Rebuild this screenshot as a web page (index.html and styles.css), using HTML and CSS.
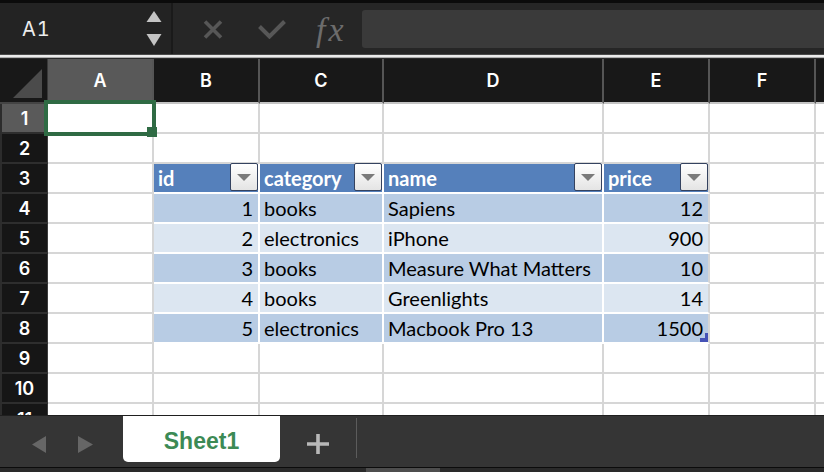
FILE: index.html
```html
<!DOCTYPE html>
<html>
<head>
<meta charset="utf-8">
<link rel="stylesheet" href="styles.css">
</head>
<body>
<div class="app">
  <div class="toolbar">
    <div class="namebox">
      <span class="cellref">A1</span>
      <svg class="stepper" width="16" height="36" viewBox="0 0 16 36"><polygon points="0.5,11 8,0 15.5,11" fill="#c4c4c4"/><polygon points="0.5,23 15.5,23 8,35" fill="#c4c4c4"/></svg>
    </div>
    <div class="fbar">
      <svg class="ic-x" width="20" height="19" viewBox="0 0 20 19"><path d="M2 1.5 L18 17.5 M18 1.5 L2 17.5" stroke="#575757" stroke-width="3.6" fill="none"/></svg>
      <svg class="ic-ok" width="28" height="19" viewBox="0 0 28 19"><polyline points="1.5,6.5 11.5,16.5 26.5,1.5" stroke="#575757" stroke-width="4" fill="none"/></svg>
      <span class="fx">fx</span>
      <div class="finput"></div>
    </div>
  </div>
  <div class="sep"></div>
  <div class="sheet">
    <div class="corner"><svg width="29" height="29" viewBox="0 0 29 29"><polygon points="0,29 29,29 29,0" fill="#4b4b4b"/></svg></div>
    <div class="ch ch-sel">A</div><div class="ch">B</div><div class="ch">C</div><div class="ch">D</div><div class="ch">E</div><div class="ch">F</div><div class="ch ch-last"></div>

    <div class="rh rh-sel">1</div><div class="c"></div><div class="c"></div><div class="c"></div><div class="c"></div><div class="c"></div><div class="c"></div><div class="c"></div>
    <div class="rh">2</div><div class="c"></div><div class="c"></div><div class="c"></div><div class="c"></div><div class="c"></div><div class="c"></div><div class="c"></div>
    <div class="rh">3</div><div class="c"></div>
    <div class="c th">id<span class="fbtn"><span class="tri"></span></span></div>
    <div class="c th">category<span class="fbtn"><span class="tri"></span></span></div>
    <div class="c th">name<span class="fbtn"><span class="tri"></span></span></div>
    <div class="c th tlast">price<span class="fbtn"><span class="tri"></span></span></div>
    <div class="c"></div><div class="c"></div>

    <div class="rh">4</div><div class="c"></div><div class="c td band1 num">1</div><div class="c td band1">books</div><div class="c td band1">Sapiens</div><div class="c td band1 num tlast">12</div><div class="c"></div><div class="c"></div>
    <div class="rh">5</div><div class="c"></div><div class="c td band2 num">2</div><div class="c td band2">electronics</div><div class="c td band2">iPhone</div><div class="c td band2 num tlast">900</div><div class="c"></div><div class="c"></div>
    <div class="rh">6</div><div class="c"></div><div class="c td band1 num">3</div><div class="c td band1">books</div><div class="c td band1">Measure What Matters</div><div class="c td band1 num tlast">10</div><div class="c"></div><div class="c"></div>
    <div class="rh">7</div><div class="c"></div><div class="c td band2 num">4</div><div class="c td band2">books</div><div class="c td band2">Greenlights</div><div class="c td band2 num tlast">14</div><div class="c"></div><div class="c"></div>
    <div class="rh">8</div><div class="c"></div><div class="c td band1 num">5</div><div class="c td band1">electronics</div><div class="c td band1">Macbook Pro 13</div><div class="c td band1 num tlast">1500<span class="resize"></span></div><div class="c"></div><div class="c"></div>
    <div class="rh">9</div><div class="c"></div><div class="c"></div><div class="c"></div><div class="c"></div><div class="c"></div><div class="c"></div><div class="c"></div>
    <div class="rh">10</div><div class="c"></div><div class="c"></div><div class="c"></div><div class="c"></div><div class="c"></div><div class="c"></div><div class="c"></div>
    <div class="rh rh-cut">11</div><div class="c"></div><div class="c"></div><div class="c"></div><div class="c"></div><div class="c"></div><div class="c"></div><div class="c"></div>

    <div class="selbox"><div class="selhandle"></div></div>
  </div>
  <div class="tabbar">
    <div class="tabrow">
      <div class="nav">
        <svg width="14" height="17" viewBox="0 0 14 17"><polygon points="14,0 14,17 0,8.5" fill="#666"/></svg>
        <svg width="15" height="17" viewBox="0 0 15 17"><polygon points="0,0 0,17 15,8.5" fill="#666"/></svg>
      </div>
      <div class="tab">Sheet1</div>
      <div class="add"><svg width="22" height="20" viewBox="0 0 22 20"><path d="M0 10 H22 M11 0 V20" stroke="#b8b8b8" stroke-width="3.6" fill="none"/></svg></div>
      <div class="tdiv"></div>
    </div>
    <div class="hscroll"><div class="thumb"></div></div>
  </div>
</div>
</body>
</html>
```
FILE: styles.css
```css
* { box-sizing: border-box; margin: 0; padding: 0; }
html, body { width: 824px; height: 472px; overflow: hidden; background: #222; }

.app { display: flex; flex-direction: column; width: 824px; height: 472px; }

/* ---------- formula toolbar ---------- */
.toolbar { flex: none; height: 54px; border-top: 3px solid #0b0b0b; background: #262626; display: flex; }
.namebox { width: 173px; background: #232323; border-right: 2px solid #1a1a1a; display: flex; align-items: center; justify-content: space-between; padding: 1px 9px 0 22px; }
.cellref { font: 400 20px "Inter", "Liberation Sans", sans-serif; font-variant-numeric: tabular-nums; letter-spacing: 1px; color: #ececec; }
.fbar { flex: 1; display: flex; align-items: center; padding-top: 1px; }
.ic-x { margin-left: 30px; }
.ic-ok { margin-left: 35px; }
.fx { margin-left: 30px; font: italic 400 34px "Liberation Serif", "DejaVu Serif", serif; letter-spacing: 3px; color: #6c6c6c; width: 33px; line-height: 1; margin-top: 1px; }
.finput { flex: 1; height: 38px; margin-left: 13px; background: #3a3a3a; border-radius: 3px 0 0 3px; }

.sep { flex: none; height: 5px; background: linear-gradient(#4a4a4a 0 1px, #ececec 1px 3px, #aeaeae 3px 4px, #2a2a2a 4px 5px); }

/* ---------- sheet grid ---------- */
.sheet { flex: 1; overflow: hidden; background: #fff; display: grid; position: relative;
  grid-template-columns: 48px 106px 106px 124px 220px 106px 106px 1fr;
  grid-template-rows: 45px; grid-auto-rows: 30px; }

.corner { background: #181818; border-right: 1px solid #3a3a3a; border-bottom: 2px solid #444; display: flex; justify-content: flex-end; align-items: flex-end; padding: 0 5px 4px 0; }
.ch { background: #181818; border-right: 2px solid #555; border-bottom: 2px solid #c4c4c4; color: #fff; font: 600 18px "Inter", "Liberation Sans", sans-serif; display: flex; align-items: center; justify-content: center; padding-bottom: 1px; }
.ch-sel { background: #595959; }
.ch-last { border-right: none; }

.rh { background: #161616; border-left: 2px solid #2c2c2c; border-right: 1px solid #3c3c3c; border-bottom: 2px solid #2e2e2e; color: #fff; font: 600 18px "Inter", "Liberation Sans", sans-serif; display: flex; align-items: center; justify-content: center; }
.rh-sel { background: #5a5a5a; }
.rh-cut { align-items: flex-start; padding-top: 5px; }

.c { background: #fff; border-right: 2px solid #d6d6d6; border-bottom: 2px solid #d6d6d6; position: relative; display: flex; align-items: center; font: 400 20px "Lato", "Liberation Sans", sans-serif; color: #000; white-space: nowrap; padding: 0 4px; }

.th { background: #5580bb; color: #fff; font-weight: 700; border-right-color: #fff; border-bottom-color: #fff; padding-left: 4px; }
.td { border-right-color: #fff; border-bottom-color: #fff; }
.band1 { background: #b8cce4; }
.band2 { background: #dce6f1; }
.num { justify-content: flex-end; padding-right: 5px; }
.tlast { border-right-color: #d6d6d6; }

.fbtn { position: absolute; right: 0; top: -1px; width: 28px; height: 28px; border: 1px solid #34425f; border-radius: 2px; background: linear-gradient(#ffffff, #e4e4e4); display: flex; align-items: center; justify-content: center; }
.tri { width: 0; height: 0; border-left: 7.5px solid transparent; border-right: 7.5px solid transparent; border-top: 7px solid #7a7a7a; margin-top: 1px; }

/* selection overlay on A1 */
.selbox { position: absolute; left: 44px; top: 41px; width: 112px; height: 36px; border: 4px solid #2f6b44; z-index: 10; }
.selhandle { position: absolute; right: -5px; bottom: -5px; width: 10px; height: 10px; background: #2f6b44; }

.resize { position: absolute; right: 0; bottom: 0; width: 8px; height: 9px; border-right: 3px solid #4552b6; border-bottom: 4px solid #4552b6; }

/* ---------- sheet tabs ---------- */
.tabbar { flex: none; height: 57px; background: #353535; border-top: 1px solid #1f1f1f; display: flex; flex-direction: column; }
.tabrow { height: 51px; display: flex; align-items: flex-start; }
.nav { width: 123px; height: 51px; display: flex; align-items: center; gap: 32px; padding: 6px 0 0 32px; }
.tab { width: 157px; height: 46px; background: #fff; border-radius: 0 0 5px 5px; display: flex; align-items: center; justify-content: center; padding-top: 4px; font: 700 23px "Liberation Sans", "Arial", sans-serif; color: #3c8a55; }
.add { width: 76px; height: 51px; display: flex; align-items: center; justify-content: center; padding-top: 5px; }
.tdiv { width: 1px; height: 40px; margin-top: 2px; background: #5c5c5c; }
.hscroll { flex: 1; border-top: 1px solid #0c0c0c; background: #2a2a2a; position: relative; }
.thumb { position: absolute; left: 366px; top: 0; bottom: 0; width: 74px; background: #4d4d4d; }
```
